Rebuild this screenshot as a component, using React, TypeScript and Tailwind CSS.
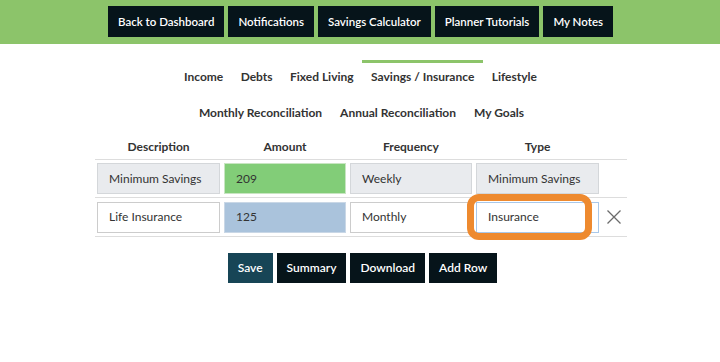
import React from 'react';

const topLinks = ['Back to Dashboard', 'Notifications', 'Savings Calculator', 'Planner Tutorials', 'My Notes'];
const tabsRow1 = ['Income', 'Debts', 'Fixed Living', 'Savings / Insurance', 'Lifestyle'];
const tabsRow2 = ['Monthly Reconciliation', 'Annual Reconciliation', 'My Goals'];

const Cell = ({ value, className }: { value: string; className: string }) => (
  <div className="px-[2px]">
    <div className={`h-[31px] flex items-center pl-[11px] text-[12px] text-[#333] border ${className}`}>
      {value}
    </div>
  </div>
);

export default function App() {
  return (
    <div className="w-[720px] h-[362px] bg-white" style={{ fontFamily: 'Lato, "Open Sans", sans-serif' }}>
      {/* Top bar */}
      <div className="h-[44px] bg-[#8cc46a] flex justify-center pt-[6px] gap-[4px] pl-[1px]">
        {topLinks.map((l) => (
          <div key={l} className="h-[31px] px-[10px] bg-[#06141a] text-white text-[11.5px] font-semibold flex items-center">
            {l}
          </div>
        ))}
      </div>

      {/* Tabs */}
      <div className="flex justify-center mt-[16px] pl-[1px]">
        {tabsRow1.map((t) => (
          <div
            key={t}
            className={`px-[8.7px] pt-[5px] pb-[4px] text-[12px] font-bold text-[#333] border-t-[3px] ${
              t === 'Savings / Insurance' ? 'border-[#8cc46a]' : 'border-transparent'
            }`}
          >
            {t}
          </div>
        ))}
      </div>
      <div className="flex justify-center mt-[10px] pl-[3px]">
        {tabsRow2.map((t) => (
          <div key={t} className="px-[9px] py-[4px] text-[12px] font-bold text-[#333]">
            {t}
          </div>
        ))}
      </div>

      {/* Table */}
      <div className="ml-[95px] w-[532px] mt-[8px]">
        <div className="grid grid-cols-[127px_126px_126px_127px_26px] border-b border-[#ddd] h-[26px] items-center text-[12px] font-bold text-[#333]">
          <div className="text-center">Description</div>
          <div className="text-center">Amount</div>
          <div className="text-center">Frequency</div>
          <div className="text-center">Type</div>
          <div />
        </div>
        <div className="grid grid-cols-[127px_126px_126px_127px_26px] border-b border-[#ddd] h-[38px] items-center">
          <Cell value="Minimum Savings" className="bg-[#e9ebee] border-[#d4d7da]" />
          <Cell value="209" className="bg-[#82cd78] border-[#c8e5c2]" />
          <Cell value="Weekly" className="bg-[#e9ebee] border-[#d4d7da]" />
          <Cell value="Minimum Savings" className="bg-[#e9ebee] border-[#d4d7da]" />
          <div />
        </div>
        <div className="grid grid-cols-[127px_126px_126px_127px_26px] border-b border-[#ddd] h-[39px] items-center">
          <Cell value="Life Insurance" className="bg-white border-[#ccc]" />
          <Cell value="125" className="bg-[#aac3dc] border-[#c9d7e6]" />
          <Cell value="Monthly" className="bg-white border-[#ccc]" />
          <div className="relative">
            <Cell value="Insurance" className="bg-white border-[#a9c8ea]" />
            <div className="absolute left-[-7px] top-[-8px] w-[125px] h-[46px] border-[7px] border-[#ee8a2f] rounded-[12px] pointer-events-none" />
          </div>
          <div className="flex justify-center">
            <svg width="16" height="16" viewBox="0 0 16 16" fill="none" stroke="#6b6b6b" strokeWidth="1.3">
              <path d="M1.5 1.5 L14.5 14.5 M14.5 1.5 L1.5 14.5" />
            </svg>
          </div>
        </div>
      </div>

      {/* Buttons */}
      <div className="flex justify-center gap-[4px] mt-[16px] pl-[5px]">
        <div className="h-[30px] px-[10px] bg-[#174556] text-white text-[12px] font-semibold flex items-center">Save</div>
        {['Summary', 'Download', 'Add Row'].map((b) => (
          <div key={b} className="h-[30px] px-[10px] bg-[#06141a] text-white text-[12px] font-semibold flex items-center">
            {b}
          </div>
        ))}
      </div>
    </div>
  );
}
